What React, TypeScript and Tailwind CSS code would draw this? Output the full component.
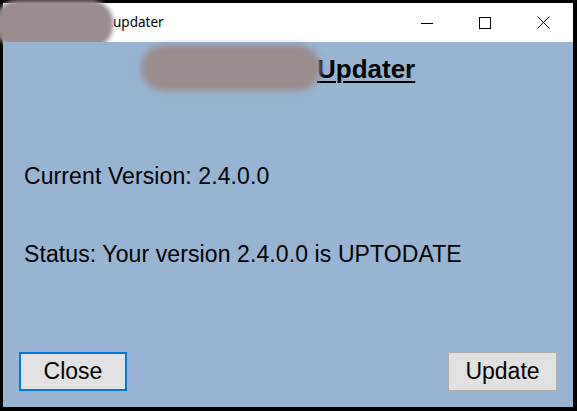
import React from 'react';

const sans = { fontFamily: '"Liberation Sans", Arial, sans-serif' };

const TitleBar: React.FC = () => (
  <div className="relative flex h-[39px] items-center bg-white">
    <span className="ml-[110px] text-[13.5px] text-black" style={{ fontFamily: '"Noto Sans", "Open Sans", sans-serif' }}>
      updater
    </span>
    <div className="ml-auto mr-[1px] flex h-full items-center">
      {/* minimize */}
      <div className="flex h-full w-[58px] items-center justify-center">
        <svg width="12" height="12" viewBox="0 0 12 12">
          <path d="M0 6.5h12" stroke="#000" strokeWidth="1" />
        </svg>
      </div>
      {/* maximize */}
      <div className="flex h-full w-[58px] items-center justify-center">
        <svg width="12" height="12" viewBox="0 0 12 12">
          <rect x="0.5" y="0.5" width="11" height="11" fill="none" stroke="#000" strokeWidth="1" />
        </svg>
      </div>
      {/* close */}
      <div className="flex h-full w-[58px] items-center justify-center">
        <svg width="13" height="13" viewBox="0 0 13 13">
          <path d="M0.5 0.5L12.5 12.5M12.5 0.5L0.5 12.5" stroke="#000" strokeWidth="1" />
        </svg>
      </div>
    </div>
    {/* redacted app name */}
    <div className="absolute left-[-8px] top-[-3px] h-[48px] w-[118px] rounded-[22px] bg-[#9b8c8e] blur-[2px]" />
  </div>
);

export default function App() {
  return (
    <div className="flex h-[411px] w-[577px] flex-col bg-black pb-[4px] pl-[3px] pr-[4px] pt-[3px]" style={sans}>
      <TitleBar />
      <div className="relative flex flex-1 flex-col bg-[#98b4d3] text-black">
        <div className="flex pl-[314px] pt-[12px]">
          <span className="text-[26px] font-bold leading-[30px] underline decoration-[2px] underline-offset-[3px]">Updater</span>
        </div>
        <div className="absolute left-[138px] top-[3px] h-[46px] w-[180px] rounded-[23px] bg-[#9b8c8e] blur-[3px]" />

        <p className="mt-[79px] pl-[21px] text-[23px] leading-[26px] tracking-[0.1px]">Current Version: 2.4.0.0</p>
        <p className="mt-[52px] pl-[21px] text-[23px] leading-[26px] tracking-[0.1px]">Status: Your version 2.4.0.0 is UPTODATE</p>

        <div className="mt-auto flex items-center justify-between pb-[16px] pl-[16px] pr-[16px]">
          <button className="flex h-[39px] w-[108px] items-center justify-center border-2 border-[#0078d7] bg-[#e1e1e1] text-[23px] text-black">
            Close
          </button>
          <button className="flex h-[39px] w-[109px] items-center justify-center border border-[#adadad] bg-[#e1e1e1] text-[23px] text-black">
            Update
          </button>
        </div>
      </div>
    </div>
  );
}
